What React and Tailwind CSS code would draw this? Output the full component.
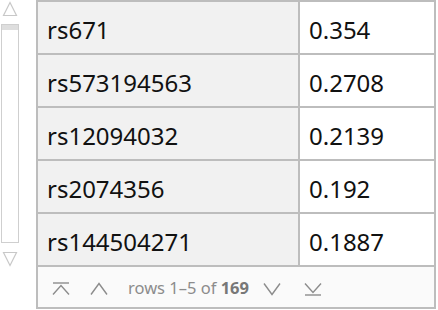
import React from 'react';

const rows = [
  ['rs671', '0.354'],
  ['rs573194563', '0.2708'],
  ['rs12094032', '0.2139'],
  ['rs2074356', '0.192'],
  ['rs144504271', '0.1887'],
];

const Tri = ({ up }) => (
  <svg width="16" height="16" viewBox="0 0 16 16" className="block">
    <path
      d={up ? 'M8 1.5 L14.5 14.5 L1.5 14.5 Z' : 'M8 14.5 L14.5 1.5 L1.5 1.5 Z'}
      fill="none"
      stroke="#c8c8c8"
      strokeWidth="1.2"
    />
  </svg>
);

const Chevron = ({ up, bar }) => (
  <svg width="20" height="14" viewBox="0 0 20 14" className="block">
    {up ? (
      <path d={bar ? 'M2 12.5 L10 3.5 L18 12.5' : 'M2 12.5 L10 1.5 L18 12.5'} fill="none" stroke="#8c8c8c" strokeWidth="1.4" />
    ) : (
      <path d={bar ? 'M2 1.5 L10 10.5 L18 1.5' : 'M2 1.5 L10 12.5 L18 1.5'} fill="none" stroke="#8c8c8c" strokeWidth="1.4" />
    )}
    {bar && (up ? (
      <path d="M2 1 H18" stroke="#8c8c8c" strokeWidth="1.4" />
    ) : (
      <path d="M2 13 H18" stroke="#8c8c8c" strokeWidth="1.4" />
    ))}
  </svg>
);

export default function App() {
  return (
    <div className="w-[438px] h-[310px] bg-white flex" style={{ fontFamily: '"Noto Sans", sans-serif' }}>
      {/* scrollbar */}
      <div className="w-[36px] flex flex-col items-start pl-[1px] pt-[1px]">
        <div className="ml-[1px]"><Tri up /></div>
        <div className="mt-[7px] w-[18px] h-[219px] border border-[#cfcfcf] flex flex-col">
          <div className="h-[5px] bg-[#dedede]" />
        </div>
        <div className="ml-[1px] mt-[8px]"><Tri /></div>
      </div>

      {/* table */}
      <div className="w-[400px] h-[309px] border-2 border-[#bdbdbd] flex flex-col">
        {rows.map(([id, v]) => (
          <div key={id} className="flex h-[53px] border-b-2 border-[#bdbdbd]">
            <div className="w-[262px] bg-[#f1f1f1] border-r-2 border-[#bdbdbd] flex items-center pl-[9px] pt-[4px] text-[24px] text-[#111]">
              {id}
            </div>
            <div className="flex-1 flex items-center pl-[9px] pt-[4px] text-[24px] text-[#111]">
              {v}
            </div>
          </div>
        ))}
        <div className="flex-1 bg-[#fafafa] flex items-center pl-[13px] pt-[3px] text-[16.5px] text-[#8c8c8c]">
          <Chevron up bar />
          <div className="ml-[18px]"><Chevron up /></div>
          <span className="ml-[19px]">rows 1–5 of <b className="font-bold text-[#777]">169</b></span>
          <div className="ml-[13px]"><Chevron /></div>
          <div className="ml-[21px]"><Chevron bar /></div>
        </div>
      </div>
    </div>
  );
}
